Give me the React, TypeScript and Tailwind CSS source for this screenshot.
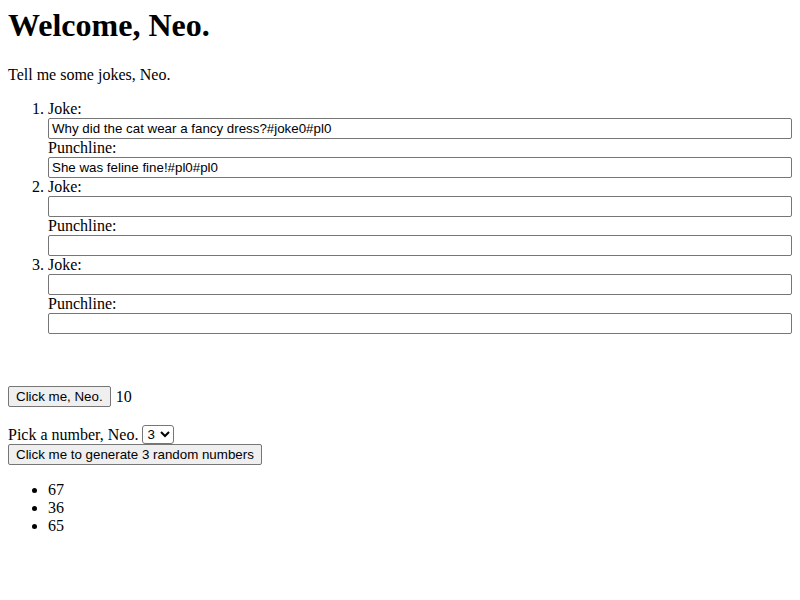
import { useState } from 'react';

const initialJokes = [
  { joke: 'Why did the cat wear a fancy dress?#joke0#pl0', punchline: 'She was feline fine!#pl0#pl0' },
  { joke: '', punchline: '' },
  { joke: '', punchline: '' }
];

const inputClass =
  "block w-full h-[21px] px-[3px] border border-[#767676] rounded-[2px] bg-white text-black font-['Liberation_Sans',Arial,sans-serif] text-[13.33px] leading-[17px] outline-none";

const buttonClass =
  "h-[21px] px-[7px] border border-[#767676] rounded-[2px] bg-[#efefef] text-black font-['Liberation_Sans',Arial,sans-serif] text-[13.33px] leading-[17px]";

export default function App() {
  const [jokes, setJokes] = useState(initialJokes);
  const [count, setCount] = useState(10);
  const [amount, setAmount] = useState('3');
  const [numbers, setNumbers] = useState([67, 36, 65]);

  const update = (i: number, key: 'joke' | 'punchline', value: string) => {
    setJokes(jokes.map((j, idx) => (idx === i ? { ...j, [key]: value } : j)));
  };

  const generate = () => {
    const n = Number(amount);
    setNumbers(Array.from({ length: n }, () => Math.floor(Math.random() * 100)));
  };

  return (
    <div className="min-h-[600px] bg-white p-2 text-black font-['Liberation_Serif','Times_New_Roman',serif] text-base">
      <h1 className="text-[32px] font-bold leading-[34px]">Welcome, Neo.</h1>

      <p className="mt-[24px] leading-[18px]">Tell me some jokes, Neo.</p>

      <ol className="mt-4 list-decimal pl-10">
        {jokes.map((j, i) => (
          <li key={i} className="leading-[18px]">
            <div>Joke:</div>
            <input
              className={inputClass}
              value={j.joke}
              onChange={(e) => update(i, 'joke', e.target.value)}
            />
            <div>Punchline:</div>
            <input
              className={inputClass}
              value={j.punchline}
              onChange={(e) => update(i, 'punchline', e.target.value)}
            />
          </li>
        ))}
      </ol>

      <div className="mt-[52px] flex items-center gap-[5px] h-[21px] leading-[18px]">
        <button className={buttonClass} onClick={() => setCount(count + 1)}>
          Click me, Neo.
        </button>
        <span>{count}</span>
      </div>

      <div className="mt-[18px] flex items-center gap-[4px] h-[19px] leading-[18px]">
        <span>Pick a number, Neo.</span>
        <select
          className="h-[19px] w-[32px] border border-[#767676] rounded-[3px] bg-white text-black font-['Liberation_Sans',Arial,sans-serif] text-[13.33px]"
          value={amount}
          onChange={(e) => setAmount(e.target.value)}
        >
          {['1', '2', '3', '4', '5'].map((o) => (
            <option key={o} value={o}>
              {o}
            </option>
          ))}
        </select>
      </div>
      <button className={buttonClass + ' block'} onClick={generate}>
        Click me to generate {amount} random numbers
      </button>

      <ul className="mt-4 list-disc pl-10 leading-[18px]">
        {numbers.map((n, i) => (
          <li key={i}>{n}</li>
        ))}
      </ul>
    </div>
  );
}
